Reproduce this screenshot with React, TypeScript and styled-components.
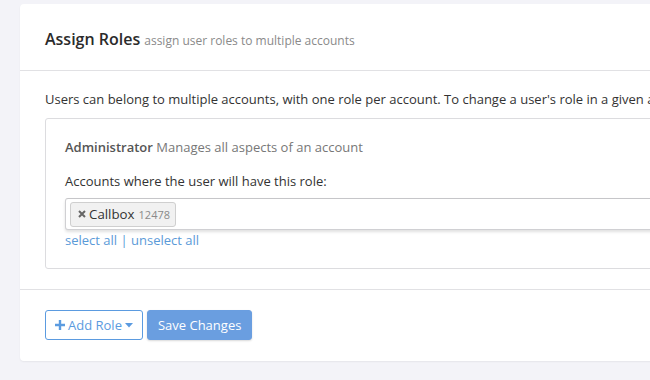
import * as React from 'react';
import styled, { createGlobalStyle } from 'styled-components';

const GlobalStyle = createGlobalStyle`
    html, body {
        margin: 0;
        padding: 0;
        background: #f3f3f8;
        overflow: hidden;
    }
    body {
        font-family: "Open Sans", "Liberation Sans", sans-serif;
        color: #333;
    }
`;

const Page = styled.div`
    padding: 4px 0 0 20px;
    height: 380px;
    box-sizing: border-box;
`;

const Card = styled.div`
    width: 720px;
    background: #fff;
    border-radius: 4px;
    box-shadow: 0 1px 2px rgba(0, 0, 0, 0.06);
`;

const Header = styled.div`
    display: flex;
    align-items: baseline;
    gap: 4px;
    height: 67px;
    box-sizing: border-box;
    padding: 24px 25px 0;
    border-bottom: 1px solid #e1e1e4;
`;

const Title = styled.h2`
    margin: 0;
    font-size: 16px;
    font-weight: 600;
    color: #2b2b2b;
`;

const Subtitle = styled.span`
    font-size: 12px;
    color: #8a8a8a;
`;

const Body = styled.div`
    padding: 19px 25px 20px;
    border-bottom: 1px solid #e1e1e4;
`;

// the sentence runs past the card edge in the screenshot, so keep it on one line
const Intro = styled.p`
    margin: 0 0 10px;
    font-size: 13px;
    line-height: 18px;
    white-space: nowrap;
    color: #333;
`;

const RoleBox = styled.div`
    border: 1px solid #dcdcdf;
    border-radius: 3px;
    padding: 19px 19px 19px;
`;

const RoleName = styled.div`
    font-size: 13px;
    line-height: 18px;
    color: #777;

    strong {
        font-weight: 600;
        color: #555;
    }
`;

const FieldLabel = styled.div`
    margin-top: 16px;
    font-size: 13px;
    line-height: 18px;
    color: #333;
`;

const TagInput = styled.div`
    margin-top: 8px;
    height: 32px;
    box-sizing: border-box;
    display: flex;
    align-items: center;
    padding: 0 4px;
    border: 1px solid #d0d0d3;
    border-top-color: #c6c6c9;
    border-radius: 3px 0 0 3px;
    box-shadow: 0 2px 3px rgba(0, 0, 0, 0.12);
    background: #fff;
`;

const Tag = styled.span`
    display: inline-flex;
    align-items: center;
    gap: 3px;
    height: 25px;
    box-sizing: border-box;
    padding: 0 5px 0 7px;
    background: #f1f1f1;
    border: 1px solid #cfcfcf;
    border-radius: 3px;
    font-size: 13.3px;
    color: #333;
`;

const TagCode = styled.span`
    font-size: 11px;
    color: #8a8a8a;
    margin-left: 1px;
`;

const LinkRow = styled.div`
    font-size: 13px;
    line-height: 18px;
    margin-top: 1px;
    color: #5a9ad8;

    a {
        color: #5a9ad8;
        text-decoration: none;
    }
`;

const Footer = styled.div`
    display: flex;
    gap: 4px;
    padding: 20px 25px 21px;
`;

const Button = styled.button<{ $primary?: boolean }>`
    height: 30px;
    box-sizing: border-box;
    display: inline-flex;
    align-items: center;
    gap: 3px;
    padding: 0 ${p => (p.$primary ? '10px' : '9px')};
    font-family: inherit;
    font-size: 13px;
    border-radius: 3px;
    cursor: pointer;
    border: 1px solid ${p => (p.$primary ? '#6a9ee0' : '#5b9be0')};
    background: ${p => (p.$primary ? '#6a9ee0' : '#fff')};
    color: ${p => (p.$primary ? '#fff' : '#5b9be0')};
    box-shadow: ${p => (p.$primary ? '0 1px 2px rgba(0,0,0,0.15)' : 'none')};
`;

const Times = () => (
    <svg width="8" height="8" viewBox="0 0 8 8">
        <path d="M1 1 L7 7 M7 1 L1 7" stroke="#666" strokeWidth="2" />
    </svg>
);

const Caret = () => (
    <svg width="8" height="5" viewBox="0 0 8 5">
        <path d="M0 0 H8 L4 4.5 Z" fill="currentColor" />
    </svg>
);

const Plus = () => (
    <svg width="10" height="10" viewBox="0 0 10 10">
        <path d="M3.8 0 H6.2 V3.8 H10 V6.2 H6.2 V10 H3.8 V6.2 H0 V3.8 H3.8 Z" fill="currentColor" />
    </svg>
);

export default function App() {
    return (
        <Page>
            <GlobalStyle />
            <Card>
                <Header>
                    <Title>Assign Roles</Title>
                    <Subtitle>assign user roles to multiple accounts</Subtitle>
                </Header>
                <Body>
                    <Intro>Users can belong to multiple accounts, with one role per account. To change a user's role in a given account, remove it from one role and add it to another.</Intro>
                    <RoleBox>
                        <RoleName><strong>Administrator</strong> Manages all aspects of an account</RoleName>
                        <FieldLabel>Accounts where the user will have this role:</FieldLabel>
                        <TagInput>
                            <Tag>
                                <Times />
                                Callbox
                                <TagCode>12478</TagCode>
                            </Tag>
                        </TagInput>
                        <LinkRow>
                            <a href="#">select all</a> | <a href="#">unselect all</a>
                        </LinkRow>
                    </RoleBox>
                </Body>
                <Footer>
                    <Button><Plus />Add Role <Caret /></Button>
                    <Button $primary>Save Changes</Button>
                </Footer>
            </Card>
        </Page>
    );
}
